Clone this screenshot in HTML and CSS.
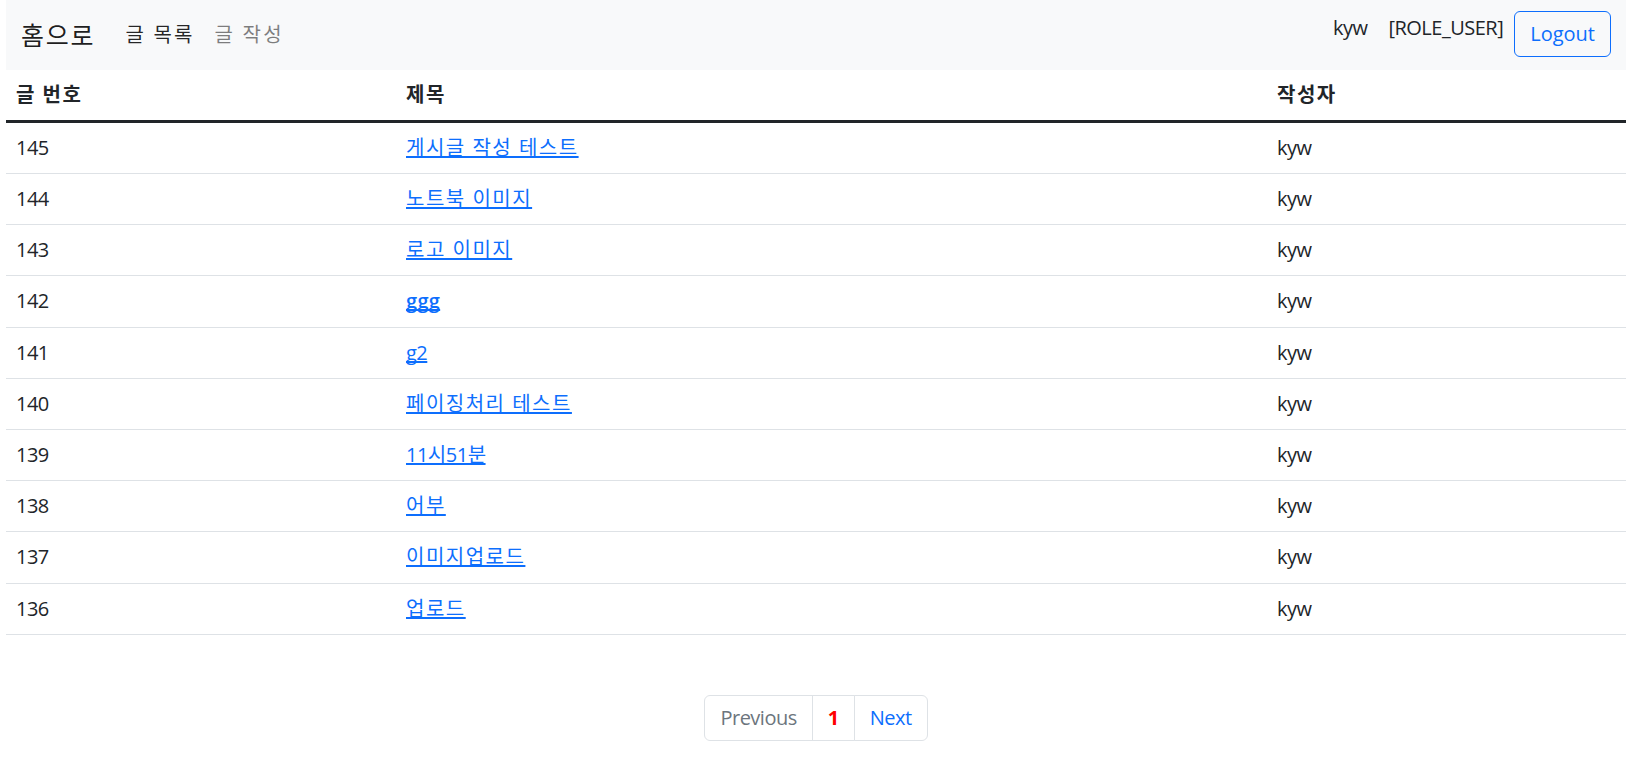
FILE: index.html
```html
<!DOCTYPE html>
<html lang="ko">
<head>
<meta charset="utf-8">
<title>게시판</title>
<link rel="stylesheet" href="styles.css">
</head>
<body>
<div class="page">
  <nav class="navbar">
    <div class="nav-left">
      <a class="brand ko" href="#">홈으로</a>
      <a class="nav-link active ko" href="#">글 목록</a>
      <a class="nav-link muted ko" href="#">글 작성</a>
    </div>
    <div class="nav-right">
      <span class="user">kyw</span>
      <span class="role">[ROLE_USER]</span>
      <button class="btn-logout">Logout</button>
    </div>
  </nav>

  <table class="board">
    <colgroup>
      <col class="c-no">
      <col class="c-title">
      <col class="c-author">
    </colgroup>
    <thead>
      <tr><th class="ko">글 번호</th><th class="ko">제목</th><th class="ko">작성자</th></tr>
    </thead>
    <tbody>
      <tr><td>145</td><td><a class="ko" href="#">게시글 작성 테스트</a></td><td>kyw</td></tr>
      <tr><td>144</td><td><a class="ko" href="#">노트북 이미지</a></td><td>kyw</td></tr>
      <tr><td>143</td><td><a class="ko" href="#">로고 이미지</a></td><td>kyw</td></tr>
      <tr><td>142</td><td><a class="wide" href="#">ggg</a></td><td>kyw</td></tr>
      <tr><td>141</td><td><a href="#">g2</a></td><td>kyw</td></tr>
      <tr><td>140</td><td><a class="ko" href="#">페이징처리 테스트</a></td><td>kyw</td></tr>
      <tr><td>139</td><td><a href="#">11시51분</a></td><td>kyw</td></tr>
      <tr><td>138</td><td><a class="ko" href="#">어부</a></td><td>kyw</td></tr>
      <tr><td>137</td><td><a class="ko" href="#">이미지업로드</a></td><td>kyw</td></tr>
      <tr><td>136</td><td><a class="ko" href="#">업로드</a></td><td>kyw</td></tr>
    </tbody>
  </table>

  <div class="pager-wrap">
    <ul class="pagination">
      <li class="page-item disabled"><span class="page-link">Previous</span></li>
      <li class="page-item current"><span class="page-link">1</span></li>
      <li class="page-item"><a class="page-link" href="#">Next</a></li>
    </ul>
  </div>
</div>
</body>
</html>
```

FILE: styles.css
```css
* { box-sizing: border-box; }

html, body {
  margin: 0;
  padding: 0;
  background: #fff;
}

body {
  font-family: "Open Sans", "Noto Sans CJK KR", sans-serif;
  font-size: 20px;
  line-height: 30px;
  letter-spacing: -0.5px;
  color: #212529;
}

.ko {
  letter-spacing: 1.5px;
}

.wide {
  font-weight: 600;
  letter-spacing: 0.3px;
}

.page {
  padding: 0 8px 0 6px;
}

.navbar {
  display: flex;
  justify-content: space-between;
  align-items: center;
  background: #f8f9fa;
  height: 70px;
  padding: 10px 15px;
}

.nav-left {
  display: flex;
  align-items: center;
}

.brand {
  font-size: 25px;
  line-height: 37px;
  padding: 6px 0;
  margin-right: 20px;
  color: rgba(0, 0, 0, 0.9);
  text-decoration: none;
}

.brand.ko { letter-spacing: 1.8px; }

.nav-link {
  padding: 10px;
  text-decoration: none;
}

.nav-link.ko { letter-spacing: 2.2px; }

.nav-link.active { color: rgba(0, 0, 0, 0.85); }
.nav-link.muted { color: rgba(0, 0, 0, 0.5); }

.nav-right {
  display: flex;
  align-items: flex-start;
  height: 50px;
}

.user,
.role {
  margin-top: 3px;
  color: #212529;
}

.user { margin-right: 21px; }
.role { margin-right: 11px; }

.btn-logout {
  font-family: inherit;
  font-size: 20px;
  line-height: 30px;
  letter-spacing: 0;
  padding: 7px 15px;
  margin-top: 1px;
  color: #0d6efd;
  background: transparent;
  border: 1px solid #0d6efd;
  border-radius: 6px;
}

.board {
  width: 100%;
  border-collapse: collapse;
  margin-bottom: 20px;
}

.c-no { width: 390px; }
.c-title { width: 871px; }
.c-author { width: 359px; }

.board th,
.board td {
  text-align: left;
  padding: 10px;
  vertical-align: top;
}

.board td {
  height: 51.2px;
  border-bottom: 1px solid #dee2e6;
}

.board th {
  font-weight: 700;
  border-bottom: 3px solid #212529;
}

.board a {
  color: #0d6efd;
  text-decoration: underline;
  text-decoration-skip-ink: none;
}

.pager-wrap {
  display: flex;
  justify-content: center;
  padding-top: 40px;
}

.pagination {
  display: flex;
  list-style: none;
  margin: 0;
  padding: 0;
}

.page-link {
  display: block;
  padding: 7px 15px;
  border: 1px solid #dee2e6;
  margin-left: -1px;
  color: #0d6efd;
  text-decoration: none;
  background: #fff;
}

.page-item:first-child .page-link {
  margin-left: 0;
  border-radius: 6px 0 0 6px;
}

.page-item:last-child .page-link {
  border-radius: 0 6px 6px 0;
}

.page-item.disabled .page-link { color: #6c757d; }
.page-item.current .page-link { color: #ff0000; font-weight: 700; }
```
